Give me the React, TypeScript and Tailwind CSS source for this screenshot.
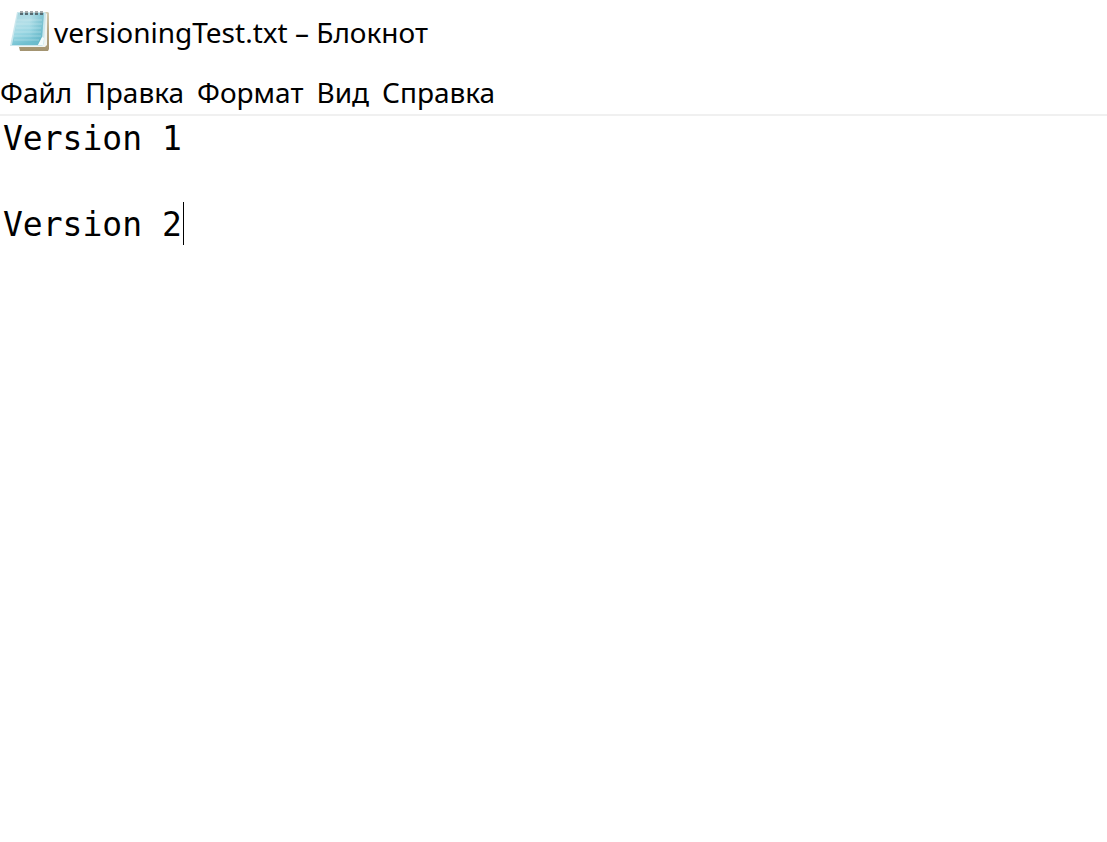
import { useState } from "react";
import type { SyntheticEvent } from "react";

const MENU_ITEMS = ["Файл", "Правка", "Формат", "Вид", "Справка"];
const INITIAL_TEXT = "Version 1\n\nVersion 2";
const LINE_HEIGHT = 43;
const RING_OFFSETS = [10, 15, 20, 25, 30];

function NotepadIcon() {
  return (
    <svg viewBox="0 0 40 42" className="h-[42px] w-10 shrink-0" aria-hidden="true">
      <defs>
        <linearGradient id="sheet" x1="0" y1="0" x2="0.3" y2="1">
          <stop offset="0" stopColor="#a4d3dd" />
          <stop offset="0.35" stopColor="#b4dfe8" />
          <stop offset="0.65" stopColor="#9bd7e3" />
          <stop offset="1" stopColor="#6fbfd0" />
        </linearGradient>
        <linearGradient id="shade" x1="0" y1="0" x2="1" y2="0">
          <stop offset="0.55" stopColor="#5fb2c4" stopOpacity="0" />
          <stop offset="1" stopColor="#5fb2c4" stopOpacity="0.65" />
        </linearGradient>
        <linearGradient id="backing" x1="0" y1="0" x2="0" y2="1">
          <stop offset="0" stopColor="#d3cbb4" />
          <stop offset="0.5" stopColor="#b5a684" />
          <stop offset="1" stopColor="#a39471" />
        </linearGradient>
      </defs>
      <path d="M34 2h4l1 1v36l-1 2H10l-1-4h25z" fill="url(#backing)" />
      <path d="M33 3h3l1 1v31l-2 2H9l-2-1h24z" fill="#f1f5f2" />
      <path d="M7 2h28l1 1-2 31-2 2H0z" fill="#cbe7ed" />
      <path d="M8 3h26l-2 25-4 7H2z" fill="url(#sheet)" />
      <path d="M8 3h26l-2 25-4 7H2z" fill="url(#shade)" />
      <path
        d="M7 10h25M6 14h26M6 18h25M5 22h26M4 26h27M4 30h25"
        stroke="#d9f1f5"
        strokeWidth="1"
        opacity="0.4"
      />
      <path d="M28 35l4-8 2 1-1 7z" fill="#f2fbfc" />
      {RING_OFFSETS.map((x) => (
        <g key={x}>
          <rect x={x} y="1" width="3" height="2" fill="#a3a9ab" />
          <rect x={x} y="3" width="3" height="2" fill="#566b72" />
        </g>
      ))}
    </svg>
  );
}

function Editor() {
  const [text, setText] = useState(INITIAL_TEXT);
  const [position, setPosition] = useState(INITIAL_TEXT.length);
  const before = text.slice(0, position).split("\n");
  const row = before.length - 1;
  const column = before[row].length;

  const trackCaret = (event: SyntheticEvent<HTMLTextAreaElement>) =>
    setPosition(event.currentTarget.selectionEnd);

  return (
    <main className="relative flex grow overflow-hidden font-['DejaVu_Sans_Mono',monospace] text-[33px] leading-[43px]">
      <textarea
        aria-label="Текст документа"
        spellCheck={false}
        wrap="off"
        value={text}
        onChange={(event) => {
          setText(event.target.value);
          setPosition(event.target.selectionEnd);
        }}
        onSelect={trackCaret}
        className="block grow resize-none overflow-hidden bg-white px-[3px] py-px text-black caret-transparent outline-none"
      />
      <span
        aria-hidden="true"
        className="pointer-events-none absolute h-[43px] w-px bg-black"
        style={{ left: `calc(${column}ch + 4px)`, top: row * LINE_HEIGHT }}
      />
    </main>
  );
}

export default function App() {
  return (
    <div className="flex min-h-screen flex-col bg-white font-['Noto_Sans','Open_Sans',sans-serif] text-[28px] text-black">
      <header className="flex h-[72px] items-start gap-1 pt-2.5 pl-2.5">
        <NotepadIcon />
        <h1 className="leading-[45px]">versioningTest.txt – Блокнот</h1>
      </header>
      <nav
        aria-label="Меню"
        className="flex h-11 items-start gap-[13px] border-b-2 border-[#f0f0f0]"
      >
        {MENU_ITEMS.map((item) => (
          <button key={item} type="button" className="leading-10">
            {item}
          </button>
        ))}
      </nav>
      <Editor />
    </div>
  );
}
